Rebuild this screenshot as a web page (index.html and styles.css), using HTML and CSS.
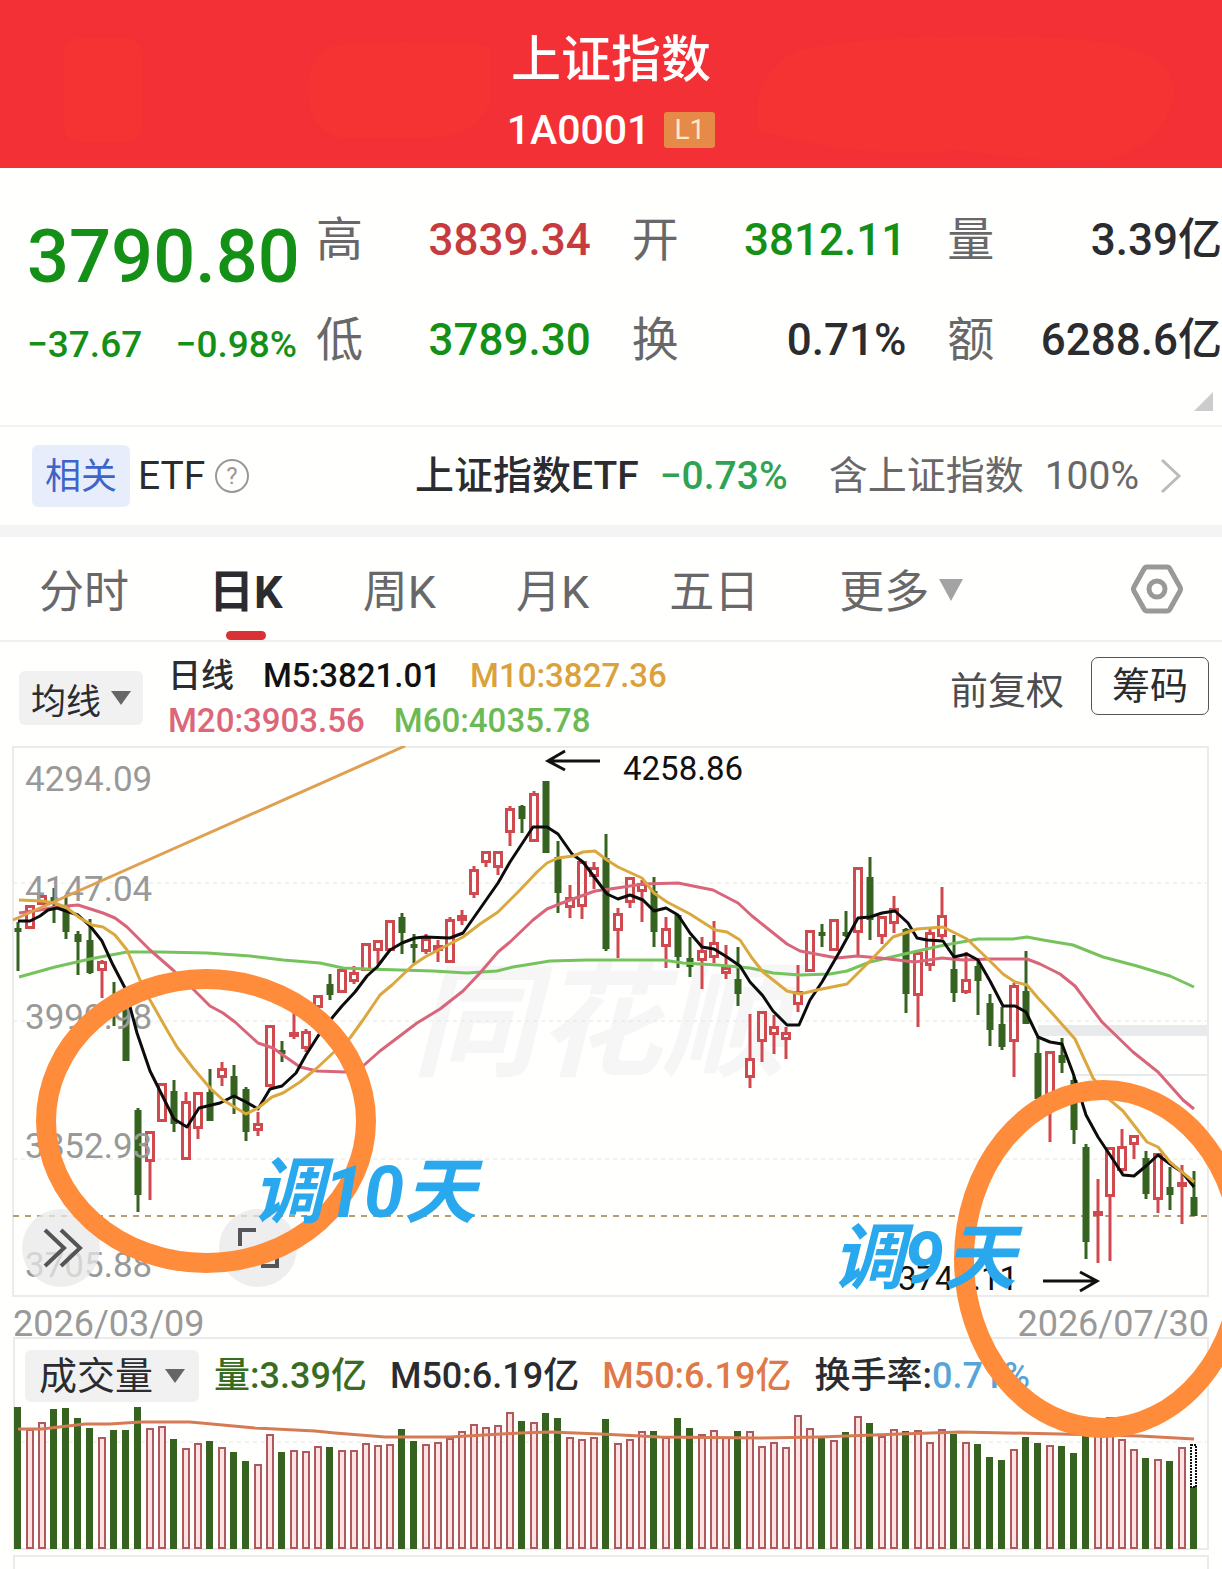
FILE: index.html
```html
<!DOCTYPE html>
<html lang="zh-CN">

<head>
    <meta charset="utf-8">
    <meta name="viewport" content="width=device-width, initial-scale=1">
    <title>上证指数 1A0001</title>
    <link rel="stylesheet" href="styles.css">
</head>

<body>
    <header class="header">
        <svg class="header-bg" viewBox="0 0 1222 168" preserveAspectRatio="none">
            <rect x="64" y="38" width="77" height="104" rx="14" />
            <path d="M330 46Q400 38 491 46V100Q480 136 430 138H340Q308 130 308 90Q308 56 330 46Z" />
            <path d="M757 130Q752 70 800 50Q880 32 1060 38Q1174 44 1174 90Q1170 140 1110 160Q1040 164 960 150Q860 160 757 130Z" />
        </svg>
        <h1>上证指数</h1>
        <div class="code">1A0001 <span class="level">L1</span></div>
    </header>

    <main>
        <section class="quote">
            <div class="price down">
                <div class="last">3790.80</div>
                <div class="change"><span>−37.67</span><span>−0.98%</span></div>
            </div>
            <div class="stats">
                <div class="stat"><span>高</span><b class="up">3839.34</b></div>
                <div class="stat"><span>开</span><b class="down">3812.11</b></div>
                <div class="stat"><span>量</span><b>3.39亿</b></div>
                <div class="stat"><span>低</span><b class="down">3789.30</b></div>
                <div class="stat"><span>换</span><b>0.71%</b></div>
                <div class="stat"><span>额</span><b>6288.6亿</b></div>
            </div>
            <i class="corner"></i>
        </section>

        <section class="related">
            <span class="tag">相关</span>
            <span class="etf">ETF</span>
            <svg class="help" viewBox="0 0 34 34">
                <circle cx="17" cy="17" r="16" />
                <text x="17" y="25">?</text>
            </svg>
            <a class="related-link" href="#etf">
                <strong>上证指数ETF</strong>
                <span class="pct">−0.73%</span>
                <span class="part">含上证指数</span>
                <span>100%</span>
                <svg class="chevron" viewBox="0 0 22 36"><path d="M2 2L19 18L2 34" /></svg>
            </a>
        </section>

        <nav class="tabs">
            <a href="#min">分时</a>
            <a href="#day" class="active">日K</a>
            <a href="#week">周K</a>
            <a href="#month">月K</a>
            <a href="#five">五日</a>
            <a href="#more" class="more">更多<i class="caret"></i></a>
            <button class="setting" aria-label="设置">
                <svg viewBox="0 0 52 50">
                    <path d="M16 3H36Q38 3 39 5L49 23Q50 25 49 27L39 45Q38 47 36 47H16Q14 47 13 45L3 27Q2 25 3 23L13 5Q14 3 16 3Z" />
                    <circle cx="26" cy="25" r="8" />
                </svg>
            </button>
        </nav>

        <section class="ma-bar">
            <button class="picker ma-picker">均线<i class="caret"></i></button>
            <div class="ma">
                <div><span>日线</span><span class="m5">M5:3821.01</span><span class="m10">M10:3827.36</span></div>
                <div><span class="m20">M20:3903.56</span><span class="m60">M60:4035.78</span></div>
            </div>
            <span class="fq">前复权</span>
            <button class="chips">筹码</button>
        </section>

        <section class="chart">
            <svg class="kline" viewBox="0 746 1222 552">
                <text class="watermark" x="412" y="1066">同花顺</text>
                <rect class="gap" x="1038" y="1025" width="170" height="11" />
                <rect class="gap" x="1075" y="1074" width="133" height="2" />
                <rect class="frame" x="13" y="747" width="1195" height="549" />
                <path class="grid" d="M13 883H1208M13 1021H1208M13 1159H1208" />
                <path class="now" d="M13 1216H1208" />
                <g id="candles"></g>
                <g class="axis">
                    <text x="25" y="791">4294.09</text>
                    <text x="25" y="901">4147.04</text>
                    <text x="25" y="1029">3999.98</text>
                    <text x="25" y="1158">3852.93</text>
                    <text x="25" y="1277">3705.88</text>
                </g>
                <g id="lines"></g>
                <path class="trend" d="M13 920L405 746" />
                <g class="peak">
                    <text x="623" y="780">4258.86</text>
                    <path d="M600 761H548M565 751L548 761L565 770" />
                    <text x="898" y="1290">3741.11</text>
                    <path d="M1043 1281H1096M1080 1272L1097 1281L1080 1291" />
                </g>
            </svg>

            <div class="tools">
                <button class="tool" aria-label="展开">
                    <svg viewBox="0 0 78 78"><path d="M23 21L42 39L23 57M39 21L58 39L39 57" /></svg>
                </button>
                <button class="tool" aria-label="全屏">
                    <svg viewBox="0 0 78 78"><path d="M21 37V21H37M58 42V57H42" /></svg>
                </button>
            </div>

            <div class="dates"><span>2026/03/09</span><span>2026/07/30</span></div>

            <div class="volume">
                <div class="vol-bar">
                    <button class="picker">成交量<i class="caret"></i></button>
                    <span class="vol-now">量:3.39亿</span>
                    <span>M50:6.19亿</span>
                    <span class="vol-ma">M50:6.19亿</span>
                    <span>换手率:<span class="rate">0.71%</span></span>
                </div>
                <svg class="vol" viewBox="13 1402 1196 148">
                    <path class="grid" d="M13 1442H1208" />
                    <g id="volumes"></g>
                    <path class="vol-line" d="M18 1429L42 1429L85 1424L110 1424L140 1422L190 1422L255 1428L315 1431L335 1433L385 1437L450 1437L520 1433L550 1432L600 1434L660 1437L760 1438L820 1437L900 1434L960 1432L1060 1434L1140 1436L1194 1439" />
                </svg>
            </div>
            <div class="next-panel"></div>

            <svg class="marks" viewBox="0 746 1222 823">
                <ellipse cx="206" cy="1121" rx="160" ry="142" />
                <ellipse cx="1103" cy="1259" rx="139" ry="169" />
                <text x="252" y="1217">调10天</text>
                <text x="832" y="1283">调9天</text>
            </svg>
        </section>
    </main>
    <script src="chart.js"></script>
</body>

</html>
```
FILE: styles.css
```css
* {
    box-sizing: border-box;
}

body {
    margin: 0;
    background: #fffffe;
    color: #2b2c30;
    font-family: Roboto, "Noto Sans CJK SC", sans-serif;
    overflow-x: hidden;
}

a {
    color: inherit;
    text-decoration: none;
}

button {
    border: 0;
    padding: 0;
    color: inherit;
    font-family: inherit;
}

svg {
    display: block;
}

.up {
    color: #c63c3e;
}

.down {
    color: #149016;
}

/* header */
.header {
    position: relative;
    height: 168px;
    padding-top: 30px;
    background: #f23035;
    color: #fff;
    text-align: center;
}

.header-bg {
    position: absolute;
    top: 0;
    left: 0;
    width: 100%;
    height: 100%;
    fill: #f43332;
}

.header h1 {
    position: relative;
    margin: 0;
    font-size: 50px;
    font-weight: 500;
    line-height: 60px;
}

.code {
    position: relative;
    display: flex;
    justify-content: center;
    align-items: center;
    gap: 14px;
    margin-top: 10px;
    font-size: 41px;
    font-weight: 500;
    line-height: 60px;
}

.level {
    width: 51px;
    background: #e58a47;
    color: #ffe9c8;
    border-radius: 3px;
    font-size: 28px;
    font-weight: 400;
    line-height: 36px;
}

/* quote */
.quote {
    position: relative;
    display: grid;
    grid-template-columns: 270px 1fr;
    gap: 19px;
    height: 259px;
    padding: 22px 0 0 27px;
    border-bottom: 2px solid #f3f3f4;
}

.last {
    margin-top: 22px;
    font-size: 74px;
    font-weight: 500;
    line-height: 90px;
}

.change {
    display: flex;
    justify-content: space-between;
    margin-top: 12px;
    font-size: 37px;
    font-weight: 500;
    line-height: 62px;
}

.stats {
    display: grid;
    grid-template-columns: repeat(3, 1fr);
    grid-auto-rows: 100px;
    column-gap: 41px;
}

.stat {
    display: flex;
    justify-content: space-between;
    line-height: 100px;
    white-space: nowrap;
}

.stat span {
    color: #68686a;
    font-size: 47px;
}

.stat b {
    font-size: 44px;
    font-weight: 500;
}

.corner {
    position: absolute;
    right: 9px;
    bottom: 14px;
    border-left: 19px solid transparent;
    border-bottom: 19px solid #ccc;
}

/* related etf */
.related {
    display: flex;
    align-items: center;
    height: 98px;
    padding: 0 40px 0 32px;
    font-size: 39px;
}

.tag {
    width: 98px;
    height: 62px;
    margin-right: 8px;
    background: #e8edfc;
    color: #3f64c8;
    border-radius: 6px;
    font-size: 36px;
    line-height: 64px;
    text-align: center;
}

.help {
    width: 34px;
    height: 34px;
    margin-left: 10px;
}

.help circle {
    fill: none;
    stroke: #999;
    stroke-width: 2;
}

.help text {
    fill: #999;
    font-size: 24px;
    text-anchor: middle;
}

.related-link {
    display: flex;
    align-items: baseline;
    gap: 21px;
    margin-left: auto;
    color: #68686a;
    line-height: 62px;
    white-space: nowrap;
}

.related-link strong {
    color: #2b2c30;
    font-weight: 500;
}

.pct {
    color: #2fa353;
    font-weight: 500;
}

.part {
    margin-left: 20px;
}

.chevron {
    align-self: center;
    width: 22px;
    fill: none;
    stroke: #bbb;
    stroke-width: 3;
}

/* tabs */
.tabs {
    display: flex;
    align-items: center;
    gap: 80px;
    height: 117px;
    padding: 0 39px;
    border-top: 12px solid #f4f4f5;
    border-bottom: 2px solid #f0f0f0;
    color: #68686a;
    font-size: 45px;
    white-space: nowrap;
}

.tabs a {
    height: 103px;
    line-height: 111px;
}

.tabs .active {
    position: relative;
    color: #2b2c30;
    font-weight: 700;
}

.active::after {
    position: absolute;
    bottom: 0;
    left: 50%;
    width: 40px;
    height: 9px;
    margin-left: -20px;
    border-radius: 5px;
    background: #d93234;
    content: "";
}

.caret {
    display: inline-block;
    border: 10px solid transparent;
    border-top: 14px solid #666;
    border-bottom: 0;
}

.more .caret {
    margin-left: 10px;
    border-width: 22px 12px 0;
    border-top-color: #a3a3a3;
    vertical-align: 7px;
}

.setting {
    width: 52px;
    margin-left: auto;
    background: none;
}

.setting svg {
    fill: none;
    stroke: #999;
    stroke-width: 5;
}

/* moving averages */
.ma-bar {
    display: flex;
    align-items: center;
    height: 104px;
    padding: 0 13px 0 19px;
    white-space: nowrap;
}

.picker {
    display: flex;
    align-items: center;
    gap: 12px;
    height: 52px;
    padding: 0 14px;
    background: #f1f1f2;
    border-radius: 6px;
    font-size: 38px;
}

.ma-picker {
    gap: 10px;
    height: 54px;
    margin-top: 8px;
    padding: 0 12px;
    font-size: 35px;
}

.ma {
    margin: 8px auto 0 25px;
    font-size: 33px;
    font-weight: 500;
    line-height: 45px;
}

.ma div {
    display: flex;
    gap: 29px;
}

.m5 {
    color: #111;
}

.m10 {
    color: #dba13a;
}

.m20 {
    color: #dc667a;
}

.m60 {
    color: #6cba55;
}

.fq {
    margin-right: 27px;
    margin-bottom: 14px;
    color: #4d4d50;
    font-size: 38px;
}

.chips {
    width: 118px;
    height: 58px;
    margin-bottom: 16px;
    background: none;
    border: 1px solid #555;
    border-radius: 7px;
    font-size: 38px;
    line-height: 54px;
}

/* charts */
.chart {
    position: relative;
    overflow: hidden;
}

.kline {
    width: 100%;
}

.watermark {
    fill: #f6f6f6;
    font-size: 125px;
    font-style: italic;
    font-weight: 700;
}

.gap {
    fill: #e9eaeb;
}

.frame {
    fill: none;
    stroke: #ebebed;
    stroke-width: 2;
}

.grid {
    fill: none;
    stroke: #e6e6e6;
    stroke-dasharray: 4 4;
}

.now {
    fill: none;
    stroke: #b59f72;
    stroke-width: 2;
    stroke-dasharray: 6 6;
}

.axis {
    fill: #999;
    font-size: 35px;
}

.candle {
    fill: none;
    stroke-width: 3;
}

.candle.r {
    stroke: #cf494e;
}

.candle.g {
    fill: #366420;
    stroke: #366420;
}

.line {
    fill: none;
    stroke-width: 3;
    stroke-linejoin: round;
}

.line5 {
    stroke: #0c0c0c;
}

.line10 {
    stroke: #dba83f;
}

.line20 {
    stroke: #d9657b;
}

.line60 {
    stroke: #76c35d;
}

.trend {
    stroke: #dfa052;
    stroke-width: 3;
}

.peak text {
    fill: #111;
    font-size: 33px;
}

.peak path {
    fill: none;
    stroke: #111;
    stroke-width: 3;
}

.tools {
    position: absolute;
    top: 463px;
    left: 22px;
    display: flex;
    gap: 119px;
}

.tool {
    width: 78px;
    height: 78px;
    border-radius: 50%;
    background: rgba(232, 232, 232, .75);
}

.tool path {
    fill: none;
    stroke: #555;
    stroke-width: 4;
}

.dates {
    display: flex;
    justify-content: space-between;
    height: 39px;
    padding: 0 13px;
    color: #999;
    font-size: 36px;
    line-height: 52px;
}

.volume {
    margin: 0 13px;
    box-shadow: inset 0 0 0 2px #ebebed;
}

.vol-bar {
    display: flex;
    align-items: center;
    gap: 23px;
    height: 65px;
    padding: 12px 0 0 12px;
    font-size: 36px;
    font-weight: 500;
    line-height: 40px;
    white-space: nowrap;
}

.vol-bar .picker {
    margin-right: -8px;
    line-height: 48px;
}

.vol-now {
    color: #386c20;
}

.vol-ma {
    color: #e0794a;
}

.rate {
    color: #57a5d8;
}

.vol {
    width: 100%;
}

.vol .r {
    fill: #ffe2e2;
    stroke: #ae595d;
    stroke-width: 2;
}

.vol .g {
    fill: #366420;
}

.vol .forecast {
    fill: #fff;
    stroke: #111;
    stroke-width: 2;
    stroke-dasharray: 2 1;
}

.vol-line {
    fill: none;
    stroke: #d67a56;
    stroke-width: 3;
}

.next-panel {
    height: 14px;
    margin: 5px 13px 0;
    border: 2px solid #ebebed;
    border-bottom: 0;
}

.marks {
    position: absolute;
    top: 0;
    left: 0;
    width: 100%;
    pointer-events: none;
}

.marks ellipse {
    fill: none;
    stroke: #ff8c3a;
    stroke-width: 20;
}

.marks text {
    fill: #2aa8ee;
    font-size: 72px;
    font-style: italic;
    font-weight: 700;
}
```
FILE: chart.js
```js
const STEP = 12;
const FIRST = 18;
const BASE = 1548;

// color, high, body top, body bottom, low, volume top
const days = [
    ['g', 922, 928, 932, 971, 1407], ['r', 905, 905, 929, 929, 1429], ['r', 895, 895, 905, 905, 1422],
    ['g', 888, 897, 900, 923, 1409], ['g', 895, 907, 932, 939, 1408], ['g', 931, 934, 942, 975, 1418],
    ['g', 919, 940, 973, 974, 1428], ['r', 960, 961, 971, 998, 1437], ['g', 982, 995, 1003, 1026, 1430],
    ['g', 998, 1000, 1061, 1061, 1430], ['g', 1108, 1110, 1195, 1212, 1407], ['r', 1131, 1131, 1162, 1200, 1428],
    ['r', 1083, 1083, 1122, 1122, 1426], ['g', 1080, 1091, 1124, 1132, 1439], ['r', 1092, 1101, 1160, 1160, 1448],
    ['r', 1092, 1092, 1129, 1139, 1443], ['g', 1069, 1092, 1121, 1121, 1441], ['r', 1062, 1068, 1078, 1086, 1447],
    ['g', 1065, 1076, 1098, 1114, 1452], ['g', 1087, 1089, 1132, 1141, 1461], ['r', 1112, 1123, 1131, 1136, 1464],
    ['r', 1025, 1025, 1087, 1087, 1434], ['g', 1041, 1050, 1053, 1062, 1452], ['r', 1013, 1032, 1037, 1039, 1450],
    ['r', 1029, 1031, 1049, 1052, 1451], ['r', 995, 995, 1008, 1008, 1446], ['g', 974, 984, 995, 1000, 1447],
    ['r', 969, 969, 993, 993, 1450], ['r', 966, 972, 982, 984, 1450], ['r', 943, 943, 971, 971, 1443],
    ['r', 940, 940, 951, 964, 1445], ['r', 920, 920, 951, 951, 1444], ['g', 913, 917, 933, 954, 1429],
    ['g', 934, 944, 947, 963, 1441], ['r', 934, 938, 952, 954, 1444], ['r', 940, 945, 951, 962, 1442],
    ['r', 917, 919, 963, 963, 1438], ['r', 910, 915, 921, 925, 1431], ['r', 866, 869, 895, 898, 1424],
    ['r', 851, 851, 863, 867, 1427], ['r', 851, 851, 868, 875, 1425], ['r', 806, 808, 833, 846, 1412],
    ['g', 805, 806, 819, 833, 1421], ['r', 791, 793, 842, 842, 1422], ['g', 781, 781, 853, 853, 1413],
    ['g', 841, 857, 893, 913, 1418], ['r', 885, 897, 908, 918, 1437], ['r', 861, 861, 907, 919, 1439],
    ['r', 862, 867, 877, 889, 1437], ['g', 834, 858, 949, 951, 1419], ['r', 908, 913, 931, 958, 1443],
    ['r', 877, 877, 903, 908, 1439], ['r', 880, 883, 892, 922, 1431], ['g', 877, 891, 932, 947, 1431],
    ['r', 917, 928, 947, 968, 1437], ['g', 915, 915, 957, 968, 1418], ['g', 937, 958, 967, 977, 1428],
    ['r', 937, 950, 961, 989, 1434], ['r', 921, 942, 958, 963, 1430], ['r', 945, 967, 974, 979, 1437],
    ['g', 947, 979, 994, 1006, 1431], ['r', 1014, 1058, 1078, 1088, 1431], ['r', 1011, 1011, 1042, 1062, 1446],
    ['r', 1015, 1026, 1035, 1054, 1442], ['r', 1027, 1032, 1040, 1059, 1447], ['r', 965, 991, 1005, 1012, 1415],
    ['r', 930, 930, 972, 972, 1428], ['g', 924, 932, 935, 947, 1438], ['r', 919, 919, 951, 951, 1440],
    ['g', 911, 932, 935, 937, 1432], ['r', 867, 867, 933, 955, 1416], ['g', 857, 877, 920, 940, 1423],
    ['r', 916, 916, 937, 944, 1436], ['r', 896, 908, 924, 933, 1429], ['g', 928, 929, 994, 1013, 1431],
    ['r', 950, 952, 996, 1027, 1430], ['r', 929, 932, 966, 971, 1442], ['r', 887, 915, 937, 939, 1429],
    ['g', 935, 969, 993, 1002, 1434], ['r', 952, 979, 993, 994, 1442], ['g', 961, 966, 981, 1015, 1444],
    ['g', 994, 1003, 1030, 1046, 1457], ['g', 1007, 1024, 1047, 1050, 1460], ['r', 983, 985, 1042, 1077, 1449],
    ['g', 951, 991, 1024, 1024, 1437], ['g', 1037, 1053, 1099, 1099, 1443], ['r', 1051, 1051, 1102, 1142, 1445],
    ['g', 1038, 1055, 1063, 1073, 1446], ['g', 1077, 1080, 1130, 1144, 1453], ['g', 1144, 1147, 1242, 1259, 1430],
    ['r', 1179, 1211, 1216, 1263, 1430], ['r', 1147, 1147, 1197, 1261, 1417], ['r', 1129, 1146, 1171, 1173, 1439],
    ['r', 1135, 1135, 1145, 1159, 1449], ['g', 1151, 1158, 1194, 1199, 1458], ['r', 1153, 1153, 1200, 1213, 1459],
    ['g', 1167, 1187, 1195, 1210, 1461], ['r', 1165, 1182, 1187, 1224, 1447], ['g', 1171, 1197, 1216, 1216, 1487]
];

const lines = {
    line60: '19,977 55,967 90,959 127,952 160,952 207,953 250,956 283,960 320,963 343,968 367,969 433,971 467,973 497,971 513,967 550,961 587,960 663,960 683,963 717,965 750,968 773,973 800,975 830,974 847,971 870,962 900,955 940,946 978,939 1013,939 1027,937 1043,940 1073,945 1103,957 1137,966 1170,976 1194,987',
    line20: '19,913 40,910 55,907 78,905 103,913 115,918 127,927 150,950 173,970 192,988 210,1006 223,1013 235,1022 247,1033 258,1043 273,1048 290,1060 300,1067 317,1071 345,1072 363,1066 380,1051 417,1023 440,1009 463,991 480,973 498,952 510,942 533,920 547,909 562,903 595,891 617,888 643,884 678,883 713,890 738,903 752,916 787,944 800,951 837,958 857,956 880,958 915,962 942,958 963,960 990,959 1027,959 1040,964 1060,974 1075,986 1102,1022 1133,1052 1158,1072 1183,1100 1194,1109',
    line5: '18,921 30,921 40,916 48,910 57,908 78,915 90,926 102,941 113,965 125,988 137,1033 150,1071 162,1095 174,1119 187,1127 199,1108 220,1103 234,1096 246,1102 258,1109 270,1089 282,1086 296,1073 306,1055 318,1036 332,1018 342,1006 355,992 367,976 377,967 390,950 402,943 415,938 425,937 450,938 463,933 498,883 510,862 533,827 547,827 558,834 572,854 583,862 607,894 618,899 630,895 643,900 654,911 666,908 678,915 690,933 702,947 714,949 727,957 740,966 750,982 763,996 773,1011 787,1025 799,1025 810,1000 822,982 840,951 858,918 870,917 882,913 895,911 908,923 917,938 927,940 943,941 954,957 967,954 978,960 990,981 1003,1006 1015,1006 1026,1012 1038,1037 1050,1042 1062,1044 1073,1073 1086,1115 1098,1137 1110,1155 1123,1175 1134,1176 1146,1166 1158,1155 1170,1164 1182,1172 1194,1187',
    line10: '19,900 42,901 55,903 67,908 80,918 92,925 103,927 115,935 127,950 140,980 150,1000 167,1030 177,1047 193,1068 210,1088 223,1100 246,1114 258,1108 272,1097 283,1093 300,1082 317,1068 333,1053 350,1038 363,1020 380,995 392,985 413,965 425,957 442,948 463,937 480,924 498,912 520,890 537,872 547,863 558,858 573,856 583,852 595,851 607,860 618,867 642,878 654,893 667,902 690,914 715,930 727,932 740,940 752,958 763,972 787,991 800,994 817,990 847,984 870,961 893,937 917,929 943,927 967,939 990,961 1003,974 1015,982 1027,985 1038,998 1052,1013 1075,1039 1093,1078 1110,1100 1123,1111 1147,1142 1158,1147 1170,1162 1194,1182'
};

let candles = '';
let volumes = '';

days.forEach(([color, high, top, bottom, low, vol], i) => {
    const x = FIRST + i * STEP;
    const w = color === 'r' ? 7 : 4;
    const h = Math.max(bottom - top - 3, 1);
    candles += `<g class="candle ${color}">
        <path d="M${x} ${high}V${top + 1}M${x} ${bottom - 1}V${low}"/>
        <rect x="${x - w / 2}" y="${top + 1.5}" width="${w}" height="${h}"/>
    </g>`;

    if (color === 'r') {
        volumes += `<rect class="r" x="${x - 3}" y="${vol + 1}" width="6" height="${BASE - vol - 1}"/>`;
    } else {
        volumes += `<rect class="g" x="${x - 4}" y="${vol}" width="7" height="${BASE + 1 - vol}"/>`;
    }
});

// estimated volume for the current day
volumes += '<rect class="forecast" x="1191" y="1445" width="5" height="42"/>';

document.getElementById('candles').innerHTML = candles;
document.getElementById('volumes').innerHTML = volumes;
document.getElementById('lines').innerHTML = Object.keys(lines)
    .map(name => `<polyline class="line ${name}" points="${lines[name]}"/>`)
    .join('');
```
